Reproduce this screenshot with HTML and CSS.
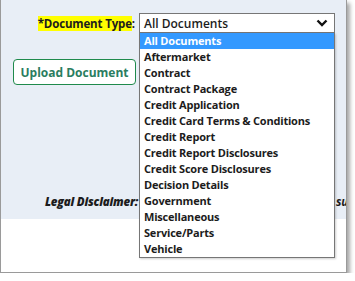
FILE: index.html
```html
<!DOCTYPE html>
<html lang="en">
<head>
  <meta charset="UTF-8" />
  <meta name="viewport" content="width=device-width, initial-scale=1" />
  <title>Documents</title>
  <link rel="stylesheet" href="styles.css">
</head>
<body>
<div class="window">
  <div class="panel">
    <div class="field-row">
      <label class="field-label"><span class="req">*Document Type</span>:</label>
      <div class="select-wrap">
        <div class="select">
          <span>All Documents</span>
          <svg class="chevron" width="12" height="8" viewBox="0 0 12 8"><path d="M1.5 1.5 L6 6 L10.5 1.5" fill="none" stroke="#111" stroke-width="2.4"/></svg>
        </div>
        <!-- open dropdown list -->
        <ul class="options">
          <li class="active">All Documents</li>
          <li>Aftermarket</li>
          <li>Contract</li>
          <li>Contract Package</li>
          <li>Credit Application</li>
          <li>Credit Card Terms &amp; Conditions</li>
          <li>Credit Report</li>
          <li>Credit Report Disclosures</li>
          <li>Credit Score Disclosures</li>
          <li>Decision Details</li>
          <li>Government</li>
          <li>Miscellaneous</li>
          <li>Service/Parts</li>
          <li>Vehicle</li>
        </ul>
      </div>
    </div>
    <div class="actions">
      <button class="upload-btn">Upload Document</button>
    </div>
    <p class="disclaimer"><b>Legal Disclaimer:</b> <span class="covered">Uploaded documents are</span>subject to review</p>
  </div>
</div>
</body>
</html>
```

FILE: styles.css
```css
body {
  margin: 0;
  background: #fff;
  font-family: "Open Sans", sans-serif;
  color: #1c1c1c;
}
.window {
  width: 345px;
  height: 272px;
  border: 1px solid #9a9a9a;
  border-top: none;
  background: #fff;
  box-shadow: 3px 3px 4px rgba(0,0,0,0.35);
}
.panel {
  height: 219px;
  background: #e8eef6;
  padding-top: 13px;
  box-sizing: border-box;
}
.field-row {
  display: flex;
  align-items: center;
  gap: 4px;
}
.field-label {
  width: 134px;
  text-align: right;
  font-size: 11.5px;
  font-weight: 700;
  letter-spacing: -0.15px;
  line-height: 15px;
  white-space: nowrap;
}
.req {
  background: #ffff00;
}
.select-wrap {
  position: relative;
  z-index: 2;
}
.select {
  width: 196px;
  height: 20px;
  box-sizing: border-box;
  border: 1px solid #767676;
  background: #fff;
  display: flex;
  align-items: center;
  justify-content: space-between;
  padding: 0 4px 0 4px;
  font-size: 12px;
  font-weight: 600;
}
.chevron {
  margin-right: 2px;
}
.options {
  position: absolute;
  top: 100%;
  left: 0;
  width: 196px;
  box-sizing: border-box;
  margin: 0;
  padding: 0;
  list-style: none;
  background: #fff;
  border: 1px solid #767676;
  border-top: none;
  box-shadow: 1px 1px 2px rgba(0,0,0,0.2);
}
.options li {
  height: 16px;
  line-height: 16px;
  padding-left: 4px;
  font-size: 11px;
  font-weight: 700;
  letter-spacing: -0.2px;
  white-space: nowrap;
}
.options li.active {
  background: #3399ff;
  color: #fff;
}
.actions {
  padding-left: 12px;
  margin-top: 26px;
}
.upload-btn {
  width: 123px;
  height: 26px;
  border: 1px solid #1f8a4c;
  border-radius: 4px;
  background: #fff;
  color: #2a7d5f;
  font-family: "Open Sans", sans-serif;
  font-size: 12px;
  font-weight: 700;
  padding: 0;
}
.disclaimer {
  margin: 109px 0 0;
  padding-left: 44px;
  font-size: 11.5px;
  line-height: 16px;
  font-style: italic;
  font-weight: 700;
  letter-spacing: -0.2px;
  white-space: nowrap;
  overflow: hidden;
}
/* part of the line hidden under the open list */
.covered {
  display: inline-block;
  width: 195px;
  overflow: hidden;
  vertical-align: top;
}
```
